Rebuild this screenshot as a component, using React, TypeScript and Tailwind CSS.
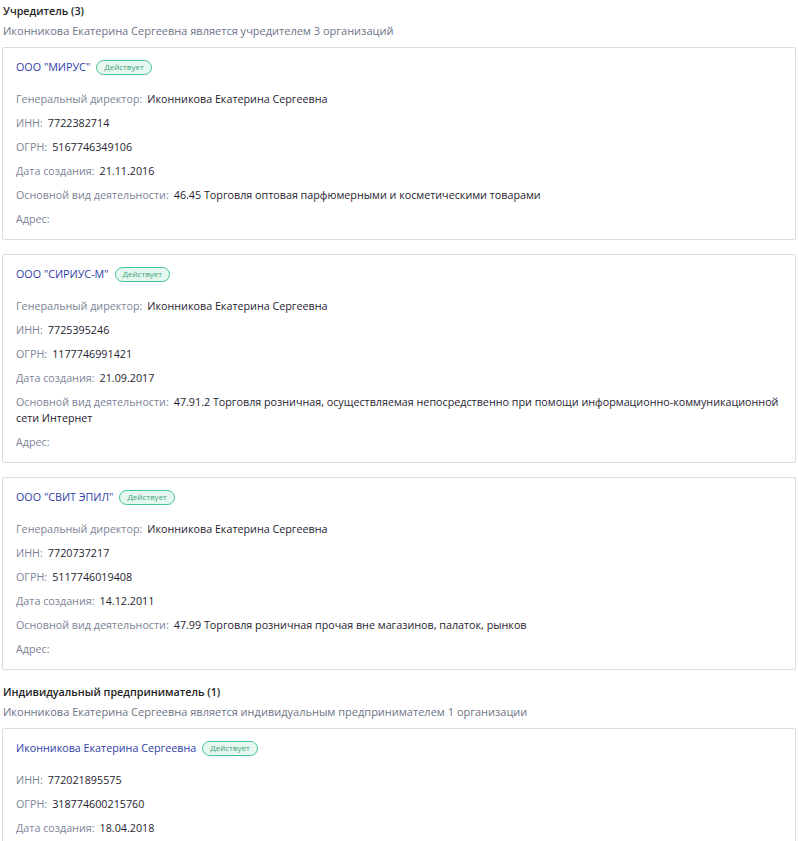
type Row = { label: string; value?: string };

type Org = { name: string; rows: Row[] };

const founders: Org[] = [
  {
    name: 'ООО "МИРУС"',
    rows: [
      { label: 'Генеральный директор:', value: 'Иконникова Екатерина Сергеевна' },
      { label: 'ИНН:', value: '7722382714' },
      { label: 'ОГРН:', value: '5167746349106' },
      { label: 'Дата создания:', value: '21.11.2016' },
      { label: 'Основной вид деятельности:', value: '46.45 Торговля оптовая парфюмерными и косметическими товарами' },
      { label: 'Адрес:' },
    ],
  },
  {
    name: 'ООО "СИРИУС-М"',
    rows: [
      { label: 'Генеральный директор:', value: 'Иконникова Екатерина Сергеевна' },
      { label: 'ИНН:', value: '7725395246' },
      { label: 'ОГРН:', value: '1177746991421' },
      { label: 'Дата создания:', value: '21.09.2017' },
      {
        label: 'Основной вид деятельности:',
        value: '47.91.2 Торговля розничная, осуществляемая непосредственно при помощи информационно-коммуникационной сети Интернет',
      },
      { label: 'Адрес:' },
    ],
  },
  {
    name: 'ООО "СВИТ ЭПИЛ"',
    rows: [
      { label: 'Генеральный директор:', value: 'Иконникова Екатерина Сергеевна' },
      { label: 'ИНН:', value: '7720737217' },
      { label: 'ОГРН:', value: '5117746019408' },
      { label: 'Дата создания:', value: '14.12.2011' },
      { label: 'Основной вид деятельности:', value: '47.99 Торговля розничная прочая вне магазинов, палаток, рынков' },
      { label: 'Адрес:' },
    ],
  },
];

const entrepreneurs: Org[] = [
  {
    name: 'Иконникова Екатерина Сергеевна',
    rows: [
      { label: 'ИНН:', value: '772021895575' },
      { label: 'ОГРН:', value: '318774600215760' },
      { label: 'Дата создания:', value: '18.04.2018' },
    ],
  },
];

function OrgCard({ org }: { org: Org }) {
  return (
    <div className="border border-[#dcdcdc] rounded-[2px] bg-white px-[13px] pt-[11px] pb-[12px]">
      <div className="flex items-center h-4">
        <a className="text-[#2f3da6] font-medium leading-4">{org.name}</a>
        <span className="ml-[6px] h-[15px] px-[7px] flex items-center rounded-full border border-[#43c596] bg-[#e6f7ef] text-[#3ea47c] text-[8px] leading-none">
          Действует
        </span>
      </div>
      <div className="mt-4 flex flex-col gap-2">
        {org.rows.map((r) => (
          <p key={r.label} className="leading-4 text-[#1f2430]">
            <span className="text-[#7c8496]">{r.label}</span>
            {r.value && <span className="ml-[5px]">{r.value}</span>}
          </p>
        ))}
      </div>
    </div>
  );
}

function Section({ title, subtitle, orgs }: { title: string; subtitle: string; orgs: Org[] }) {
  return (
    <section>
      <h3 className="leading-4 text-[#222] font-semibold px-[1px]">{title}</h3>
      <p className="leading-4 text-[11px] text-[#6d7486] mt-1 px-[1px]">{subtitle}</p>
      <div className="mt-2 flex flex-col gap-[14px]">
        {orgs.map((o) => (
          <OrgCard key={o.name} org={o} />
        ))}
      </div>
    </section>
  );
}

export default function App() {
  return (
    <div className="bg-white min-h-screen pt-[3px] pl-[2px] pr-[2px] text-[10.75px] font-['Open_Sans',sans-serif]">
      <Section
        title="Учредитель (3)"
        subtitle="Иконникова Екатерина Сергеевна является учредителем 3 организаций"
        orgs={founders}
      />
      <div className="mt-[14px]">
        <Section
          title="Индивидуальный предприниматель (1)"
          subtitle="Иконникова Екатерина Сергеевна является индивидуальным предпринимателем 1 организации"
          orgs={entrepreneurs}
        />
      </div>
    </div>
  );
}
